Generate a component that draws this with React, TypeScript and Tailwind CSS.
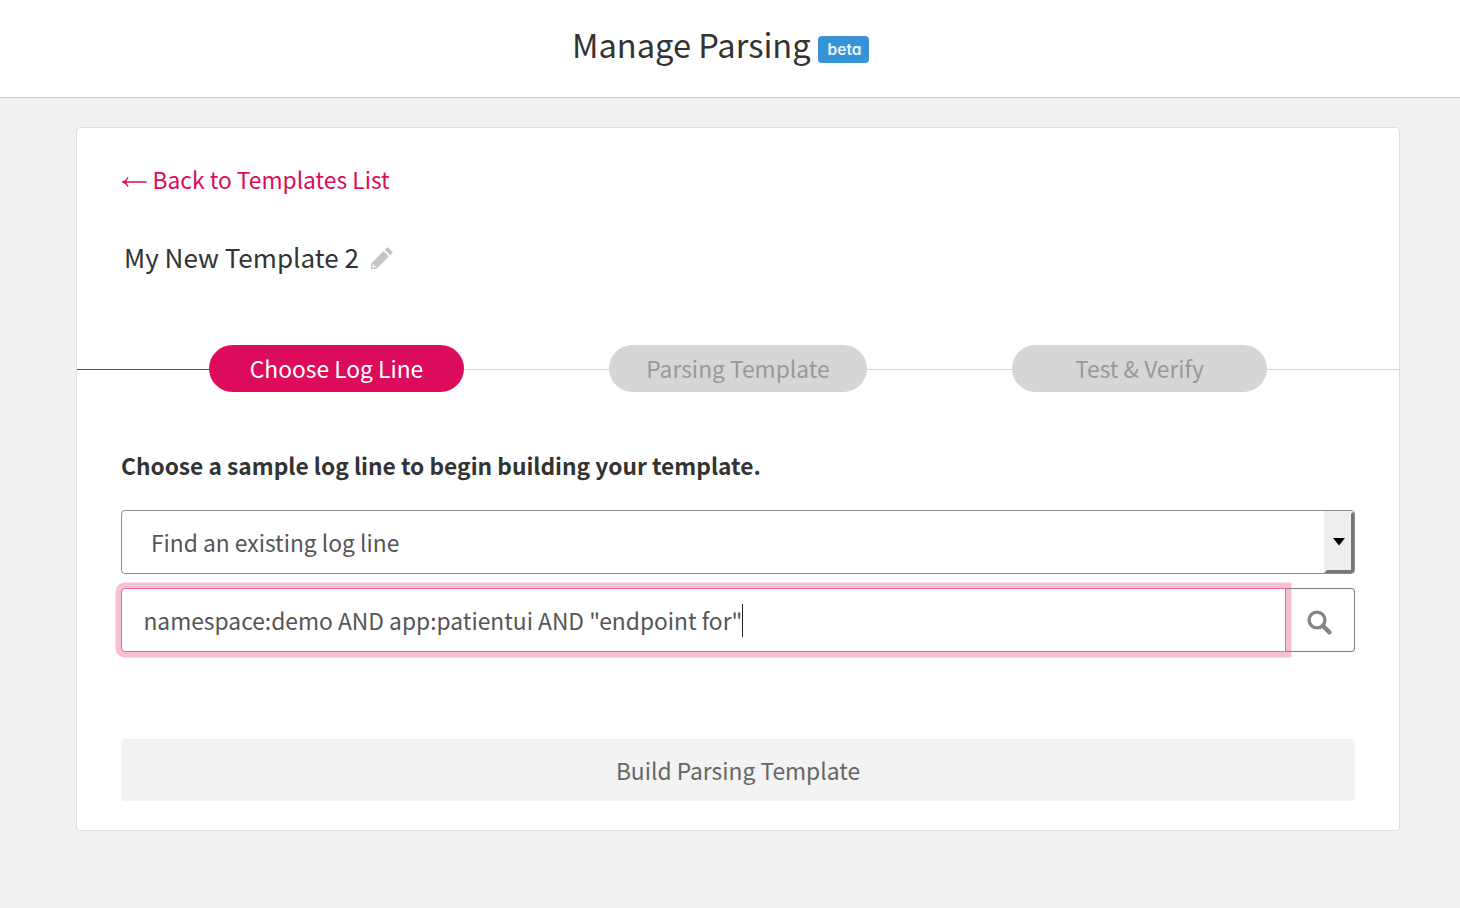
import React from "react";

function PencilIcon() {
  return (
    <svg width="23" height="23" viewBox="0 0 24 24" className="ml-[11px] mt-px shrink-0" aria-hidden="true">
      <path
        fill="#c4c4c4"
        fillRule="evenodd"
        d="M1 23v-5.6L14.1 4.3l5.6 5.6L6.6 23H1zM15.4 3l2.3-2.3q.7-.7 1.4 0l4.2 4.2q.7.7 0 1.4L21 8.6 15.4 3zM2.6 18.2v3.2h3.4v-1.4H4.2v-1.8z"
      />
    </svg>
  );
}

function SearchIcon() {
  return (
    <svg width="26" height="26" viewBox="0 0 26 26" className="mt-[6px]" aria-hidden="true">
      <circle cx="10" cy="10" r="7.9" fill="none" stroke="#858585" strokeWidth="3.4" />
      <path d="M16 16l6.5 6.3" stroke="#858585" strokeWidth="4.4" strokeLinecap="round" />
    </svg>
  );
}

const steps = [
  { label: "Choose Log Line", pill: "w-[255px] bg-[#dd0b5b] text-white", line: "w-[132px] bg-[#dd0b5b]" },
  { label: "Parsing Template", pill: "w-[258px] bg-[#d6d6d6] text-[#999999]", line: "w-[145px] bg-[#d6d6d6]" },
  { label: "Test & Verify", pill: "w-[255px] bg-[#d6d6d6] text-[#999999]", line: "w-[145px] bg-[#d6d6d6]" },
];

function Steps() {
  return (
    <div className="mt-[68px] flex h-[47px] items-center">
      {steps.map((s) => (
        <React.Fragment key={s.label}>
          <span className={`mt-[2px] h-px shrink-0 ${s.line}`} />
          <span className={`flex h-[47px] shrink-0 items-center justify-center rounded-full pt-[2px] text-[22.8px] ${s.pill}`}>
            <span>{s.label}</span>
          </span>
        </React.Fragment>
      ))}
      <span className="mt-[2px] h-px flex-1 bg-[#d6d6d6]" />
    </div>
  );
}

export default function App() {
  return (
    <div className="h-[908px] overflow-hidden bg-[#f0f1f3] font-['Noto_Sans_CJK_SC',sans-serif] leading-none text-[#333333]">
      <header className="flex h-[98px] items-start border-b border-[#c6c7c9] bg-white pl-[572px] pt-[26px]">
        <h1 className="w-[239px] whitespace-nowrap text-[32.6px] leading-[36px]">Manage Parsing</h1>
        <span className="ml-[7px] mt-[10px] flex h-[27px] w-[51px] items-center justify-center rounded-[4px] bg-[#3694d6] pl-[2px] font-['Inter',sans-serif] text-[15.5px] font-semibold text-[#e9f4fb] [font-feature-settings:'cv11']">
          beta
        </span>
      </header>

      <main className="mx-[76px] mt-[29px] h-[704px] w-[1324px] rounded-[4px] border border-[#dcdedf] bg-white">
        <a className="ml-[45px] mt-[37px] flex h-[30px] w-max items-center text-[22.8px] text-[#dd0b5b]" href="#templates">
          <svg width="25" height="14" viewBox="0 0 25 14" className="mr-[5px] mt-[4px]" aria-hidden="true">
            <path d="M1 7H24.5M6 2.5Q4.6 5.8 1 7Q4.6 8.2 6 11.5" fill="none" stroke="#dd0b5b" strokeWidth="1.4" />
          </svg>
          <span className="pl-[0.5px]">Back to Templates List</span>
        </a>

        <div className="ml-[47px] mt-[45px] flex h-[35px] items-center">
          <h2 className="whitespace-nowrap text-[26.05px]">My New Template 2</h2>
          <PencilIcon />
        </div>

        <div className="pt-[2px]">
          <Steps />
        </div>

        <div className="mx-[44px] flex flex-col">
          <p className="mt-[59px] h-[30px] whitespace-nowrap text-[22.74px] font-bold leading-[30px]">
            Choose a sample log line to begin building your template.
          </p>

          <div className="mt-[29px] flex h-[64px] w-[1234px] items-stretch justify-between overflow-hidden rounded-[4px] border border-[#8c8c8c] bg-white">
            <span className="flex items-center pl-[29px] pt-[2px] text-[22.8px] text-[#555555]">Find an existing log line</span>
            <span className="flex w-[30px] items-center justify-center border-[3px] border-b-[#777777] border-l-[#eeeeee] border-r-[#777777] border-t-[#eeeeee] bg-[#eeeeee]">
              <svg width="12" height="8" viewBox="0 0 12 8" aria-hidden="true">
                <path d="M0 0h12L6 7.5z" fill="#000" />
              </svg>
            </span>
          </div>

          <div className="mt-[14px] flex h-[64px] w-[1234px]">
            <div className="flex w-[1165px] items-center rounded-l-[4px] border border-[#f263a0] bg-white pl-[21.4px] shadow-[0_0_0_5.5px_#f6bfd6]">
              <span className="whitespace-nowrap pt-[2px] text-[22.8px] text-[#555555]">
                namespace:demo AND app:patientui AND "endpoint for"
              </span>
              <span className="h-[33px] w-px bg-[#222222]" />
            </div>
            <button className="relative flex w-[69px] items-center justify-center rounded-r-[4px] border border-l-0 border-[#808080]">
              <SearchIcon />
            </button>
          </div>

          <button className="mt-[87px] flex h-[62px] w-[1234px] items-center justify-center rounded-[4px] bg-[#f3f3f3] pt-[2px] text-[22.8px] text-[#666666]">
            <span>Build Parsing Template</span>
          </button>
        </div>
      </main>
    </div>
  );
}
